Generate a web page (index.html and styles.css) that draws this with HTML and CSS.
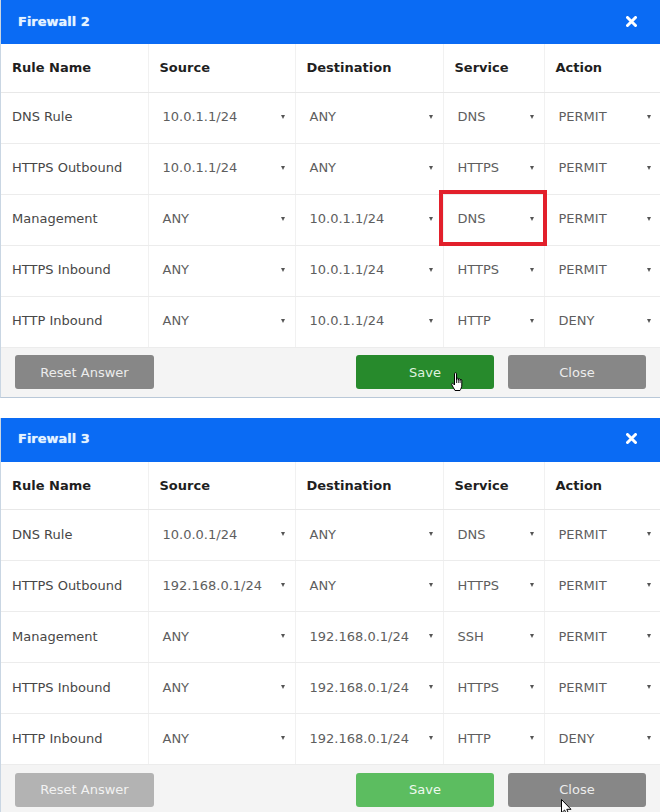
FILE: index.html
```html
<!DOCTYPE html>
<html>
<head>
<meta charset="utf-8">
<link rel="stylesheet" href="styles.css">
</head>
<body>
<div class="page">
  <section class="dialog">
    <header class="dlg-head">
      <h2 class="dlg-title">Firewall 2</h2>
      <svg class="dlg-x" width="11" height="11" viewBox="0 0 11 11"><path d="M1.5 1.5 L9.5 9.5 M9.5 1.5 L1.5 9.5" stroke="#fff" stroke-width="3" stroke-linecap="round"/></svg>
    </header>
    <table class="rules">
      <colgroup><col class="c1"><col class="c2"><col class="c3"><col class="c4"><col class="c5"></colgroup>
      <thead><tr><th>Rule Name</th><th>Source</th><th>Destination</th><th>Service</th><th>Action</th></tr></thead>
      <tbody>
        <tr><td class="name">DNS Rule</td><td><div class="sel">10.0.1.1/24<i></i></div></td><td><div class="sel">ANY<i></i></div></td><td><div class="sel">DNS<i></i></div></td><td><div class="sel">PERMIT<i></i></div></td></tr>
        <tr><td class="name">HTTPS Outbound</td><td><div class="sel">10.0.1.1/24<i></i></div></td><td><div class="sel">ANY<i></i></div></td><td><div class="sel">HTTPS<i></i></div></td><td><div class="sel">PERMIT<i></i></div></td></tr>
        <tr><td class="name">Management</td><td><div class="sel">ANY<i></i></div></td><td><div class="sel">10.0.1.1/24<i></i></div></td><td class="marked"><div class="sel">DNS<i></i></div></td><td><div class="sel">PERMIT<i></i></div></td></tr>
        <tr><td class="name">HTTPS Inbound</td><td><div class="sel">ANY<i></i></div></td><td><div class="sel">10.0.1.1/24<i></i></div></td><td><div class="sel">HTTPS<i></i></div></td><td><div class="sel">PERMIT<i></i></div></td></tr>
        <tr><td class="name">HTTP Inbound</td><td><div class="sel">ANY<i></i></div></td><td><div class="sel">10.0.1.1/24<i></i></div></td><td><div class="sel">HTTP<i></i></div></td><td><div class="sel">DENY<i></i></div></td></tr>
      </tbody>
    </table>
    <footer class="dlg-foot">
      <button class="btn btn-grey wide">Reset Answer</button>
      <button class="btn btn-green push">Save
        <svg class="cursor-hand" width="13" height="20" viewBox="0 0 13 20"><path d="M3.5 1.5 C3.5 0.6 5.5 0.6 5.5 1.5 L5.5 8 L5.5 6.8 C5.5 6 7.3 6 7.3 6.8 L7.3 8.3 L7.3 7.4 C7.3 6.6 9.1 6.6 9.1 7.4 L9.1 8.6 L9.1 8 C9.1 7.3 10.8 7.3 10.8 8 L10.8 13 C10.8 15.5 9.8 17 9 18.5 L4 18.5 C3.4 17 1.6 14.8 0.8 12.8 C0.3 11.5 1.5 10.8 2.4 11.8 L3.5 13 Z" fill="#fff" stroke="#000" stroke-width="1"/><path d="M5.5 8 V11 M7.3 8.3 V11 M9.1 8.6 V11" stroke="#000" stroke-width="0.8"/></svg>
      </button>
      <button class="btn btn-grey">Close</button>
    </footer>
  </section>

  <section class="dialog second">
    <header class="dlg-head">
      <h2 class="dlg-title">Firewall 3</h2>
      <svg class="dlg-x" width="11" height="11" viewBox="0 0 11 11"><path d="M1.5 1.5 L9.5 9.5 M9.5 1.5 L1.5 9.5" stroke="#fff" stroke-width="3" stroke-linecap="round"/></svg>
    </header>
    <table class="rules">
      <colgroup><col class="c1"><col class="c2"><col class="c3"><col class="c4"><col class="c5"></colgroup>
      <thead><tr><th>Rule Name</th><th>Source</th><th>Destination</th><th>Service</th><th>Action</th></tr></thead>
      <tbody>
        <tr><td class="name">DNS Rule</td><td><div class="sel">10.0.0.1/24<i></i></div></td><td><div class="sel">ANY<i></i></div></td><td><div class="sel">DNS<i></i></div></td><td><div class="sel">PERMIT<i></i></div></td></tr>
        <tr><td class="name">HTTPS Outbound</td><td><div class="sel">192.168.0.1/24<i></i></div></td><td><div class="sel">ANY<i></i></div></td><td><div class="sel">HTTPS<i></i></div></td><td><div class="sel">PERMIT<i></i></div></td></tr>
        <tr><td class="name">Management</td><td><div class="sel">ANY<i></i></div></td><td><div class="sel">192.168.0.1/24<i></i></div></td><td><div class="sel">SSH<i></i></div></td><td><div class="sel">PERMIT<i></i></div></td></tr>
        <tr><td class="name">HTTPS Inbound</td><td><div class="sel">ANY<i></i></div></td><td><div class="sel">192.168.0.1/24<i></i></div></td><td><div class="sel">HTTPS<i></i></div></td><td><div class="sel">PERMIT<i></i></div></td></tr>
        <tr><td class="name">HTTP Inbound</td><td><div class="sel">ANY<i></i></div></td><td><div class="sel">192.168.0.1/24<i></i></div></td><td><div class="sel">HTTP<i></i></div></td><td><div class="sel">DENY<i></i></div></td></tr>
      </tbody>
    </table>
    <footer class="dlg-foot">
      <button class="btn btn-light wide">Reset Answer</button>
      <button class="btn btn-lgreen push">Save</button>
      <button class="btn btn-grey">Close
        <svg class="cursor-arrow" width="12" height="18" viewBox="0 0 12 18"><path d="M0.5 0.5 L0.5 14 L3.6 11 L5.8 16.5 L8 15.6 L5.8 10.3 L10 10.3 Z" fill="#fff" stroke="#000" stroke-width="1" stroke-linejoin="round"/></svg>
      </button>
    </footer>
  </section>
</div>
</body>
</html>
```

FILE: styles.css
```css
* { box-sizing: border-box; }
html, body { margin: 0; padding: 0; background: #fff; }
body {
  font-family: "DejaVu Sans", Verdana, sans-serif;
  font-size: 13px;
  width: 660px;
  height: 812px;
  overflow: hidden;
}
.page { display: flex; flex-direction: column; gap: 20px; }
.dialog {
  width: 660px;
  background: #fff;
  border-left: 1px solid #c9d6e3;
  border-bottom: 1px solid #b9c8d8;
}
.dlg-head {
  height: 44px;
  background: #0a6bf4;
  display: flex;
  align-items: center;
  justify-content: space-between;
  padding: 0 23px 0 17px;
}
.dlg-title {
  margin: 0;
  font-size: 13px;
  font-weight: bold;
  color: #e6f3ff;
  text-shadow: 0 0 1px #9fd0ff;
  position: relative;
  top: -1px;
}
.dlg-x { display: block; position: relative; top: -1px; }
.rules {
  width: 660px;
  border-collapse: collapse;
  table-layout: fixed;
}
.c1 { width: 147px; }
.c2 { width: 147px; }
.c3 { width: 148px; }
.c4 { width: 101px; }
.c5 { width: 117px; }
.rules th {
  height: 48px;
  text-align: left;
  font-weight: bold;
  color: #1f1f1f;
  padding: 0 0 0 11px;
  border-bottom: 1px solid #e8e8e8;
  border-left: 1px solid #f1f1f1;
}
.rules td {
  height: 51px;
  padding: 0 12px 0 14px;
  color: #5e5e5e;
  border-bottom: 1px solid #ececec;
  border-left: 1px solid #f1f1f1;
  position: relative;
}
.rules th:first-child, .rules td:first-child { border-left: none; }
.rules td.name { padding-left: 11px; color: #474747; }
.sel {
  display: flex;
  align-items: center;
  justify-content: space-between;
  white-space: nowrap;
  position: relative;
  top: -1px;
}
.rules td.name { padding-bottom: 2px; }
.sel i {
  display: block;
  width: 0; height: 0;
  border-left: 2.5px solid transparent;
  border-right: 2.5px solid transparent;
  border-top: 4px solid #555;
  margin-right: -2px;
}
.marked::after {
  content: "";
  position: absolute;
  left: -5px; top: -5px; right: -3px; bottom: -1px;
  border: 4px solid #e2202b;
  pointer-events: none;
}
.dlg-foot {
  height: 49px;
  background: #f4f4f4;
  display: flex;
  align-items: center;
  padding: 0 14px 0 14px;
  gap: 14px;
}
.btn {
  width: 138px;
  height: 34px;
  border: none;
  border-radius: 3px;
  font-family: "DejaVu Sans", Verdana, sans-serif;
  font-size: 13px;
  padding: 0;
  position: relative;
}
.btn.wide { width: 139px; }
.push { margin-left: auto; }
.btn-grey { background: #878787; color: #ececec; }
.btn-green { background: #278a2c; color: #dff2df; }
.btn-light { background: #b3b3b3; color: #f2f2f2; }
.btn-lgreen { background: #5cbd60; color: #eef9ee; }
.cursor-hand { position: absolute; left: 95px; top: 17px; }
.cursor-arrow { position: absolute; left: 53px; top: 26px; }
```
